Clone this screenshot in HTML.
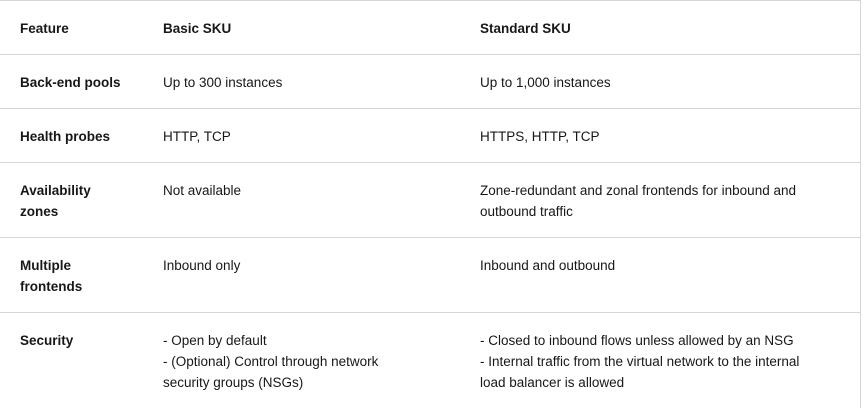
<!DOCTYPE html>
<html><head><style>
html,body{margin:0;padding:0;background:#fff;width:863px;height:408px;overflow:hidden}
table{border-collapse:collapse;table-layout:fixed;position:absolute;left:0;top:0;width:861px;font-family:"Liberation Sans",sans-serif;font-size:13.5px;color:#171717;line-height:21px}
td,th{border-top:1px solid #d6d6d6;border-bottom:1px solid #d6d6d6;padding:17px 0 15px 0;vertical-align:top;text-align:left;white-space:nowrap}
tr td:last-child,tr th:last-child{border-right:1px solid #d6d6d6}
th{font-weight:bold}
td:first-child{font-weight:bold}
.c1{padding-left:20px}
</style></head><body>
<table>
<colgroup><col style="width:163px"><col style="width:317px"><col></colgroup>
<tr><th class="c1">Feature</th><th>Basic SKU</th><th>Standard SKU</th></tr>
<tr><td class="c1">Back-end pools</td><td>Up to 300 instances</td><td>Up to 1,000 instances</td></tr>
<tr><td class="c1">Health probes</td><td>HTTP, TCP</td><td>HTTPS, HTTP, TCP</td></tr>
<tr><td class="c1">Availability<br>zones</td><td>Not available</td><td>Zone-redundant and zonal frontends for inbound and<br>outbound traffic</td></tr>
<tr><td class="c1">Multiple<br>frontends</td><td>Inbound only</td><td>Inbound and outbound</td></tr>
<tr><td class="c1" style="border-bottom:none">Security</td><td style="border-bottom:none">- Open by default<br>- (Optional) Control through network<br>security groups (NSGs)</td><td style="border-bottom:none">- Closed to inbound flows unless allowed by an NSG<br>- Internal traffic from the virtual network to the internal<br>load balancer is allowed</td></tr>
</table>
</body></html>
